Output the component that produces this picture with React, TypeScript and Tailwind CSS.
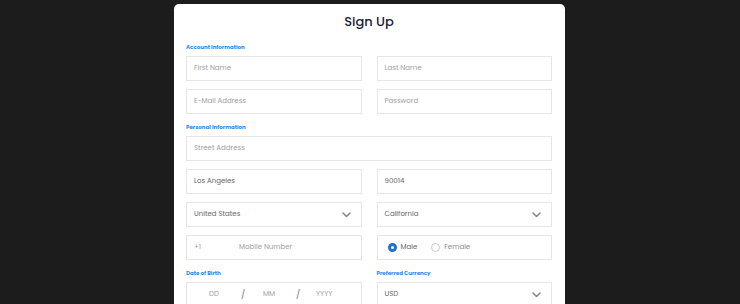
import React from "react";

const Chevron = () => (
  <svg width="9" height="6" viewBox="0 0 9 6" fill="none">
    <path d="M1 1l3.5 3.5L8 1" stroke="#8a8a8a" strokeWidth="1.6" strokeLinecap="round" strokeLinejoin="round" />
  </svg>
);

const Box = ({ children, className = "" }: { children?: React.ReactNode; className?: string }) => (
  <div className={`h-[25px] border border-[#e6e6e6] bg-white flex items-center text-[7px] ${className}`}>
    {children}
  </div>
);

const Label = ({ children, first = false }: { children: React.ReactNode; first?: boolean }) => (
  <div className={`h-[10px] leading-[10px] text-[5.5px] font-bold text-[#2a88f4] ${first ? "mt-[2px]" : "mt-[8px]"} mb-[4px]`}>
    {children}
  </div>
);

export default function App() {
  return (
    <div
      className="w-[740px] h-[304px] overflow-hidden bg-[#1c1c1c] flex justify-center"
      style={{ fontFamily: "Poppins, Inter, 'Noto Sans', sans-serif" }}
    >
      <div className="mt-[4px] ml-[-1px] w-[391px] h-[320px] bg-white rounded-[5px] pl-[12px] pr-[13px]">
        <div className="h-[36px] flex items-center justify-center text-[13px] font-medium text-[#1b1b38]">Sign Up</div>
        <Label first>Account Information</Label>
        <div className="grid grid-cols-2 gap-x-[15px] gap-y-[8px]">
          <Box className="px-[7px] text-[#a0a0a0]">First Name</Box>
          <Box className="px-[7px] text-[#a0a0a0]">Last Name</Box>
          <Box className="px-[7px] text-[#a0a0a0]">E-Mail Address</Box>
          <Box className="px-[7px] text-[#a0a0a0]">Password</Box>
        </div>
        <Label>Personal Information</Label>
        <div className="flex flex-col gap-[8px]">
          <Box className="px-[7px] text-[#a0a0a0]">Street Address</Box>
          <div className="grid grid-cols-2 gap-x-[15px] gap-y-[8px]">
            <Box className="px-[7px] text-[#666]">Los Angeles</Box>
            <Box className="px-[7px] text-[#666]">90014</Box>
            <Box className="pl-[7px] pr-[10px] text-[#666] justify-between">
              <span>United States</span>
              <Chevron />
            </Box>
            <Box className="pl-[7px] pr-[10px] text-[#666] justify-between">
              <span>California</span>
              <Chevron />
            </Box>
            <Box className="px-[7px] text-[#a0a0a0]">
              <span className="w-[45px]">+1</span>
              <span>Mobile Number</span>
            </Box>
            <Box className="pl-[10px]">
              <span className="flex items-center gap-[4px] text-[#666]">
                <span className="w-[9px] h-[9px] rounded-full border-[3px] border-[#1f6fd6] bg-white" />
                Male
              </span>
              <span className="flex items-center gap-[4px] text-[#888] ml-[14px]">
                <span className="w-[9px] h-[9px] rounded-full border border-[#c8c8c8] bg-white" />
                Female
              </span>
            </Box>
          </div>
        </div>
        <div className="grid grid-cols-2 gap-x-[15px]">
          <div>
            <Label>Date of Birth</Label>
            <Box className="text-[#a0a0a0]">
              <span className="ml-[22px] w-[32px]">DD</span>
              <span className="w-[22px] text-[9px] text-[#777]">/</span>
              <span className="w-[33px]">MM</span>
              <span className="w-[20px] text-[9px] text-[#777]">/</span>
              <span>YYYY</span>
            </Box>
          </div>
          <div>
            <Label>Preferred Currency</Label>
            <Box className="pl-[7px] pr-[10px] text-[#666] justify-between">
              <span>USD</span>
              <Chevron />
            </Box>
          </div>
        </div>
      </div>
    </div>
  );
}
